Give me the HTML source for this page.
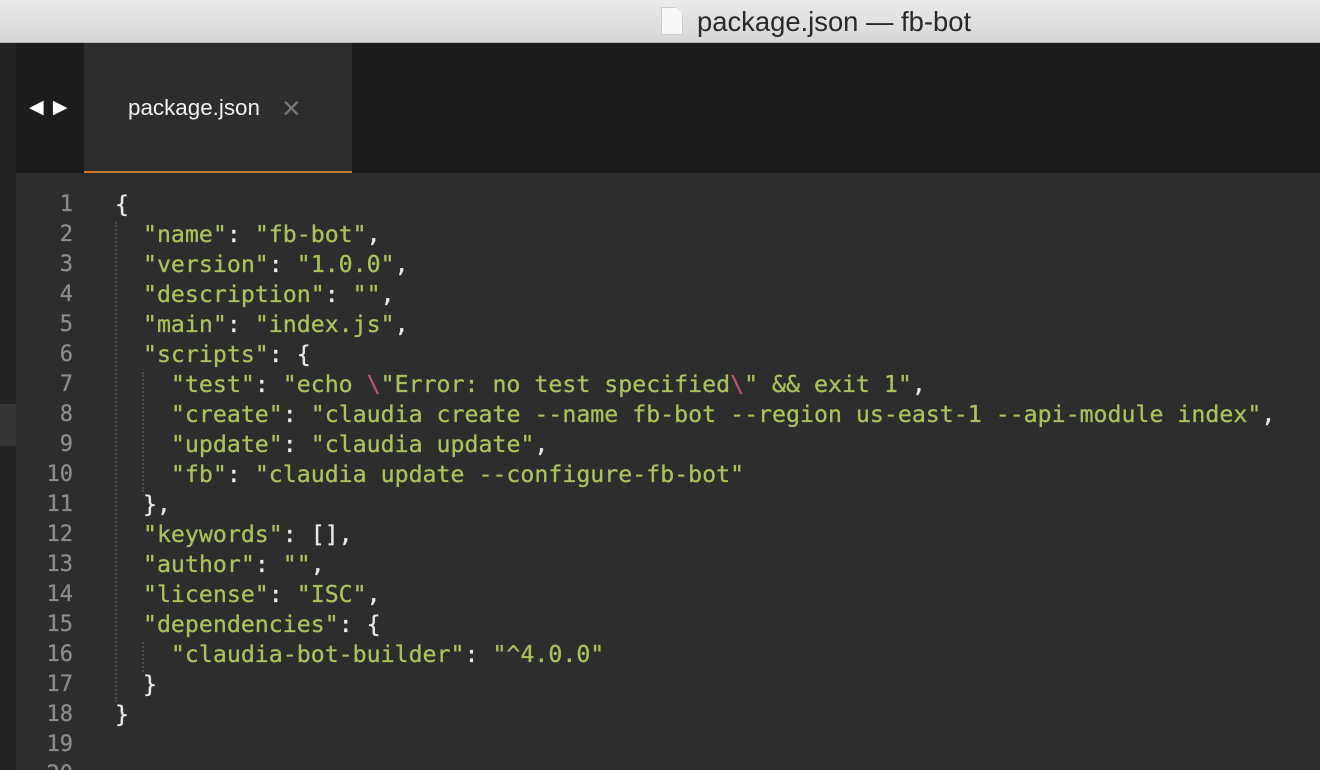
<!DOCTYPE html>
<html><head><style>
html,body{margin:0;width:1320px;height:770px;overflow:hidden}
body{background:#2d2d2d;position:relative;font-family:"Liberation Sans",sans-serif}
#title{position:absolute;left:0;top:0;width:1320px;height:43px;background:linear-gradient(#ebebeb,#d6d6d6);border-bottom:1px solid #b5b5b5;box-sizing:border-box}
#title .t{position:absolute;left:697px;top:6px;font-size:27.4px;color:#2a2a2a}
#title .ic{position:absolute;left:661px;top:7px;width:22px;height:28px;background:#f7f7f7;border:1px solid #ccc;box-sizing:border-box;clip-path:polygon(0 0,65% 0,100% 28%,100% 100%,0 100%)}
#left{position:absolute;left:0;top:43px;width:16px;height:727px;background:#232323}
#lefthl{position:absolute;left:0;top:404px;width:16px;height:42px;background:#353535}
#tabbar{position:absolute;left:16px;top:43px;width:1304px;height:130px;background:#1c1c1c}
#tab{position:absolute;left:84px;top:43px;width:268px;height:128px;background:#2d2d2d;border-bottom:2px solid #c8782c}
#tab .n{position:absolute;left:44px;top:52px;font-size:22.4px;color:#f0f0f0}
#tab .x{position:absolute;left:198px;top:47px;font-size:32px;color:#777;font-weight:300}
#arr{position:absolute;left:29px;top:96px;color:#fff;font-size:19px;letter-spacing:2px}
#code{position:absolute;left:0;top:190px;font-family:"DejaVu Sans Mono",monospace;font-size:23.22px;line-height:30px;white-space:pre;color:#e8e8e8;-webkit-text-stroke:0.3px currentColor}
.ln{position:absolute;left:16px;width:57px;text-align:right;color:#8b8b8b;font-family:"DejaVu Sans Mono",monospace;font-size:22px;line-height:30px;-webkit-text-stroke:0.3px currentColor}
.s{color:#a9c25b}.e{color:#b3556f}
.g{position:absolute;width:0;border-left:2px dotted #4a4a4a}
</style></head><body>
<div id="title"><div class="ic"></div><div class="t">package.json — fb-bot</div></div>
<div id="left"></div><div id="lefthl"></div>
<div id="tabbar"></div>
<div id="arr">◀ ▶</div>
<div id="tab"><span class="n">package.json</span><span class="x">×</span></div>
<div class="g" style="left:115px;top:222px;height:480px"></div>
<div class="g" style="left:142px;top:372px;height:120px"></div>
<div class="g" style="left:142px;top:642px;height:30px"></div>
<div style="position:absolute;left:0;top:190px">
<div class="ln" style="top:0">1</div><div class="ln" style="top:30px">2</div><div class="ln" style="top:60px">3</div><div class="ln" style="top:90px">4</div><div class="ln" style="top:120px">5</div><div class="ln" style="top:150px">6</div><div class="ln" style="top:180px">7</div><div class="ln" style="top:210px">8</div><div class="ln" style="top:240px">9</div><div class="ln" style="top:270px">10</div><div class="ln" style="top:300px">11</div><div class="ln" style="top:330px">12</div><div class="ln" style="top:360px">13</div><div class="ln" style="top:390px">14</div><div class="ln" style="top:420px">15</div><div class="ln" style="top:450px">16</div><div class="ln" style="top:480px">17</div><div class="ln" style="top:510px">18</div><div class="ln" style="top:540px">19</div><div class="ln" style="top:570px">20</div>
</div>
<div id="code" style="left:115px">{
  <span class="s">"name"</span>: <span class="s">"fb-bot"</span>,
  <span class="s">"version"</span>: <span class="s">"1.0.0"</span>,
  <span class="s">"description"</span>: <span class="s">""</span>,
  <span class="s">"main"</span>: <span class="s">"index.js"</span>,
  <span class="s">"scripts"</span>: {
    <span class="s">"test"</span>: <span class="s">"echo </span><span class="e">\</span><span class="s">"Error: no test specified</span><span class="e">\</span><span class="s">" &amp;&amp; exit 1"</span>,
    <span class="s">"create"</span>: <span class="s">"claudia create --name fb-bot --region us-east-1 --api-module index"</span>,
    <span class="s">"update"</span>: <span class="s">"claudia update"</span>,
    <span class="s">"fb"</span>: <span class="s">"claudia update --configure-fb-bot"</span>
  },
  <span class="s">"keywords"</span>: [],
  <span class="s">"author"</span>: <span class="s">""</span>,
  <span class="s">"license"</span>: <span class="s">"ISC"</span>,
  <span class="s">"dependencies"</span>: {
    <span class="s">"claudia-bot-builder"</span>: <span class="s">"^4.0.0"</span>
  }
}</div>
</body></html>
